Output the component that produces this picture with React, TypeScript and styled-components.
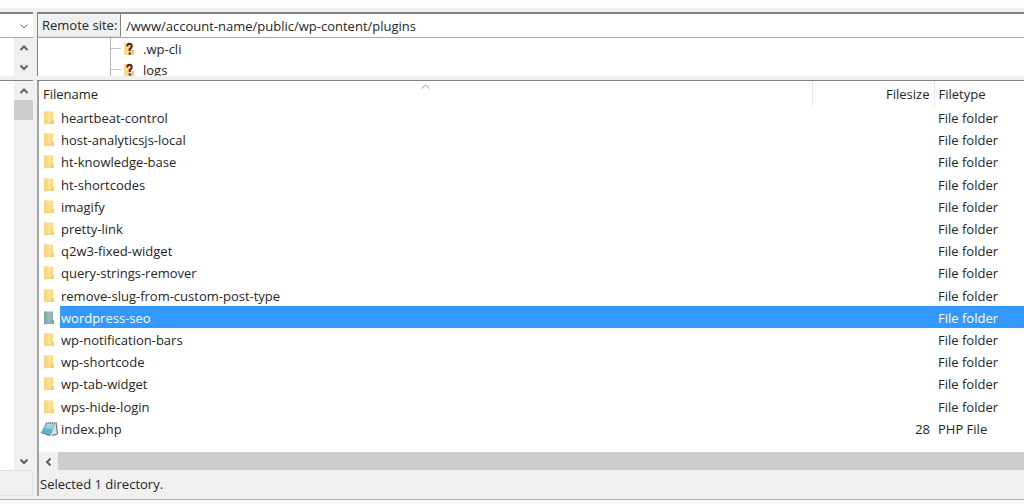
import React from "react";
import styled, { createGlobalStyle, css } from "styled-components";

const GlobalStyle = createGlobalStyle`
  *, *::before, *::after { box-sizing: border-box; }
  html, body, #root { height: 100%; }
  body {
    margin: 0;
    background: #f0f0f0;
    color: #262626;
    font: 13px/22px "Open Sans", "Noto Sans", sans-serif;
    overflow: hidden;
  }
  button, input, select { font: inherit; color: inherit; margin: 0; padding: 0; border: 0; border-radius: 0; }
`;

const Window = styled.div`
  display: flex;
  flex-direction: column;
  min-height: 100vh;
`;

const LogStrip = styled.div`
  height: 8px;
  background: #fdfdfd;
`;

const Panes = styled.div`
  flex: 1;
  display: grid;
  grid-template-columns: 33px minmax(0, 1fr);
  grid-template-rows: auto auto 1fr auto;
  column-gap: 4px;
  padding-top: 4px;
`;

const BottomEdge = styled.div`
  height: 8px;
  border-top: 3px solid #f0f0f0;
  background: #f6f6f6;
  box-shadow: inset 0 1px #b2b2b6;
`;

const PathPicker = styled.div`
  display: grid;
  align-items: center;
  justify-items: end;
  height: 26px;
  padding-right: 4px;
  background: #fff;
  border-top: 2px solid #828282;
  border-bottom: 1px solid #a6a6a6;
  & > * { grid-area: 1 / 1; }
`;

const PathSelect = styled.select`
  appearance: none;
  width: 100%;
  height: 100%;
  background: transparent;
`;

const AddressBar = styled.div`
  display: flex;
  height: 26px;
  background: #fff;
  border-top: 2px solid #828282;
  border-bottom: 1px solid #a6a6a6;
  border-left: 1px solid #828282;
`;

const AddressLabel = styled.label`
  flex: none;
  width: 83px;
  padding-left: 4px;
  background: #f0f0f0;
  border-right: 1px solid #828282;
  border-bottom: 1px solid #d8d8d8;
  white-space: nowrap;
`;

const AddressInput = styled.input`
  flex: 1;
  min-width: 0;
  padding-left: 5px;
  background: transparent;
  outline: 0;
`;

const LocalPane = styled.div`
  display: flex;
  background: #fff;
`;

const VerticalScroll = styled.div`
  display: flex;
  flex-direction: column;
  width: 19px;
  margin-left: auto;
  background: #f0f0f0;
`;

const ScrollButton = styled.button`
  display: flex;
  align-items: center;
  justify-content: center;
  width: 19px;
  height: 19px;
  background: #f0f0f0;
`;

const Thumb = styled.div`
  height: 20px;
  background: #cdcdcd;
`;

const Spacer = styled.div`
  flex: 1;
`;

const Tree = styled.ul`
  height: 38px;
  margin: 0;
  padding: 0 0 0 72px;
  list-style: none;
  overflow: hidden;
  background: #fff;
  border-left: 1px solid #828282;
`;

const TreeItem = styled.li`
  display: flex;
  align-items: center;
  height: 21px;
  border-left: 1px solid #b8b8b8;
  &::before {
    content: "";
    width: 10px;
    height: 1px;
    margin-right: 2px;
    background: #c4c4c4;
  }
  svg { margin-right: 8px; }
`;

const listEdge = css`
  border-top: 4px solid #f0f0f0;
  box-shadow: inset 0 1px #828282;
`;

const LocalList = styled(LocalPane)`
  ${listEdge}
  padding-top: 1px;
`;

const RemoteList = styled.div`
  ${listEdge}
  display: flex;
  flex-direction: column;
  background: #fff;
`;

const ListBody = styled.div`
  flex: 1;
  margin-top: 1px;
  border-left: 2px solid #a0a0a0;
`;

const Files = styled.table`
  width: 100%;
  table-layout: fixed;
  border-collapse: collapse;
  td, th { padding: 0; font-weight: 400; white-space: nowrap; }
  td { padding-top: 2px; line-height: 20px; }
`;

const HeadCell = styled.th<{ $align?: "right" }>`
  height: 25px;
  padding: 0 4px !important;
  text-align: ${(p) => p.$align ?? "left"};
  & + & { border-left: 1px solid #e8e8e8; }
`;

const SortHead = styled.div`
  display: grid;
  & > * { grid-area: 1 / 1; }
  svg { justify-self: center; margin-top: 1px; }
`;

const Row = styled.tr<{ $selected?: boolean }>`
  height: 22px;
  &:nth-child(5n + 4) { height: 23px; }
  td + td {
    ${(p) => p.$selected && css`background: #3399ff; color: #fff;`}
  }
`;

const IconCell = styled.td`
  svg { display: block; }
`;

const NameCell = styled.td`
  padding-left: 1px !important;
`;

const SizeCell = styled.td`
  padding-right: 4px !important;
  text-align: right;
`;

const TypeCell = styled.td`
  padding-left: 4px !important;
`;

const HorizontalScroll = styled.div`
  display: flex;
  height: 18px;
  background: #cdcdcd;
  border-left: 2px solid #a0a0a0;
`;

const LocalStatus = styled.div`
  height: 26px;
  border: 1px solid #e2e2e2;
  border-left: 0;
`;

const Status = styled.div`
  height: 26px;
  padding: 3px 0 0 1px;
  border-left: 2px solid #a0a0a0;
`;

type Direction = "up" | "down" | "left";
const chevrons: Record<Direction, string> = {
  up: "M1.5 7 5 3.5 8.5 7",
  down: "M1.5 3.5 5 7 8.5 3.5",
  left: "M6.5 1.5 3 5 6.5 8.5",
};

const Chevron = ({ to, thin }: { to: Direction; thin?: boolean }) => (
  <svg width="10" height="10" viewBox="0 0 10 10" fill="none" stroke={thin ? "#777" : "#606060"} strokeWidth={thin ? 1 : 2} aria-hidden>
    <path d={chevrons[to]} />
  </svg>
);

const SortMark = () => (
  <svg width="9" height="5" viewBox="0 0 9 5" fill="none" stroke="#999" aria-hidden>
    <path d="M.5 4.5 4.5 1l4 3.5" />
  </svg>
);

const FolderIcon = ({ selected }: { selected?: boolean }) => (
  <svg width="21" height="16" viewBox="0 0 21 16" aria-hidden>
    <path d="M5 1.500h9V10l1 .5V14H9l-4 .5z" fill={selected ? "#8fb1b3" : "#fad97f"} />
    <path d="M5 1.500h2.500L9 13l-4 1.500z" fill={selected ? "#84a9ac" : "#f8d679"} />
    <path d="M12.500 9.500 15 10.500V14h-3z" fill={selected ? "#7fa3a5" : "#f3cd72"} />
    <path d="M8 2.500h4L11.500 12H9z" fill={selected ? "#98b8b9" : "#fde39a"} />
  </svg>
);

const PhpIcon = () => (
  <svg width="21" height="16" viewBox="0 0 21 16" aria-hidden>
    <path d="M8 1.500 18 1l1 12-3 2L3 12z" fill="#d9dcdc" />
    <path d="M7 2h9l-4 12-10-3z" fill="#64b2cc" />
    <path d="M8 3h7l-2 5-7-1z" fill="#a2d6e0" />
    <path d="M2 11 12 14l-1 1L2 12z" fill="#367d9c" />
    <path d="M17 1.500 18.500 13 13 14.500" fill="none" stroke="#776b64" />
    <path d="M7 1.500h10" stroke="#8a8d8d" strokeDasharray="1 1" />
  </svg>
);

const UnknownFolderIcon = () => (
  <svg width="12" height="16" viewBox="0 0 12 16" aria-hidden>
    <path d="M1 2h8v7l2 .5V14H1z" fill="#fbd88a" />
    <path d="M9 9h2v5H8z" fill="#f3c877" />
    <path d="M4.200 5.500Q4.200 2.800 6.500 2.800t2.300 2.500Q8.800 7 6.700 8v2" fill="none" stroke="#5b2226" strokeWidth="2" />
    <path d="M5.700 11.500h2.200v2H5.700z" fill="#5b2226" />
  </svg>
);

const folders = [
  "heartbeat-control",
  "host-analyticsjs-local",
  "ht-knowledge-base",
  "ht-shortcodes",
  "imagify",
  "pretty-link",
  "q2w3-fixed-widget",
  "query-strings-remover",
  "remove-slug-from-custom-post-type",
  "wordpress-seo",
  "wp-notification-bars",
  "wp-shortcode",
  "wp-tab-widget",
  "wps-hide-login",
];

const files = [
  ...folders.map((name) => ({ name, size: "", type: "File folder" })),
  { name: "index.php", size: "28", type: "PHP File" },
];

export default function App() {
  const [selected, setSelected] = React.useState("wordpress-seo");
  const [path, setPath] = React.useState("/www/account-name/public/wp-content/plugins");

  return (
    <>
      <GlobalStyle />
      <Window>
        <LogStrip />
        <Panes>
          <PathPicker>
            <Chevron to="down" thin />
            <PathSelect aria-label="Local site" />
          </PathPicker>
          <AddressBar>
            <AddressLabel htmlFor="remote-site">Remote site:</AddressLabel>
            <AddressInput id="remote-site" value={path} onChange={(e) => setPath(e.target.value)} />
          </AddressBar>

          <LocalPane>
            <VerticalScroll>
              <ScrollButton aria-label="Scroll local tree up"><Chevron to="up" /></ScrollButton>
              <ScrollButton aria-label="Scroll local tree down"><Chevron to="down" /></ScrollButton>
            </VerticalScroll>
          </LocalPane>
          <Tree>
            {[".wp-cli", "logs"].map((name) => (
              <TreeItem key={name}><UnknownFolderIcon />{name}</TreeItem>
            ))}
          </Tree>

          <LocalList>
            <VerticalScroll>
              <ScrollButton aria-label="Scroll local files up"><Chevron to="up" /></ScrollButton>
              <Thumb />
              <Spacer />
              <ScrollButton aria-label="Scroll local files down"><Chevron to="down" /></ScrollButton>
            </VerticalScroll>
          </LocalList>
          <RemoteList>
            <ListBody>
              <Files>
                <colgroup>
                  <col style={{ width: 21 }} />
                  <col />
                  <col style={{ width: 122 }} />
                  <col style={{ width: 90 }} />
                </colgroup>
                <thead>
                  <tr>
                    <HeadCell colSpan={2}>
                      <SortHead><span>Filename</span><SortMark /></SortHead>
                    </HeadCell>
                    <HeadCell $align="right">Filesize</HeadCell>
                    <HeadCell>Filetype</HeadCell>
                  </tr>
                </thead>
                <tbody>
                  {files.map(({ name, size, type }) => (
                    <Row key={name} $selected={name === selected} onClick={() => setSelected(name)}>
                      <IconCell>{size ? <PhpIcon /> : <FolderIcon selected={name === selected} />}</IconCell>
                      <NameCell>{name}</NameCell>
                      <SizeCell>{size}</SizeCell>
                      <TypeCell>{type}</TypeCell>
                    </Row>
                  ))}
                </tbody>
              </Files>
            </ListBody>
            <HorizontalScroll>
              <ScrollButton aria-label="Scroll files left"><Chevron to="left" /></ScrollButton>
            </HorizontalScroll>
          </RemoteList>

          <LocalStatus />
          <Status>Selected 1 directory.</Status>
        </Panes>
        <BottomEdge />
      </Window>
    </>
  );
}
